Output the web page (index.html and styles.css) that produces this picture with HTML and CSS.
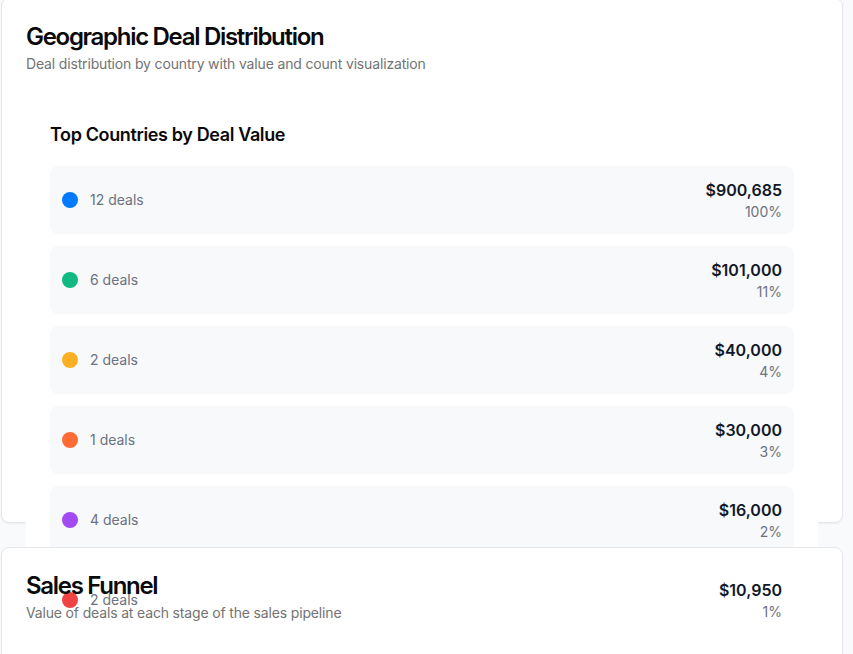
FILE: index.html
```html
<!DOCTYPE html>
<html lang="en">
<head>
<meta charset="utf-8">
<title>Geographic Deal Distribution</title>
<link rel="stylesheet" href="styles.css">
</head>
<body>
<div class="page">
  <div class="card card-geo">
    <div class="card-header">
      <h3 class="card-title">Geographic Deal Distribution</h3>
      <p class="card-desc">Deal distribution by country with value and count visualization</p>
    </div>
    <div class="card-content">
      <div class="panel">
        <h4 class="panel-title">Top Countries by Deal Value</h4>
        <div class="rows">
          <div class="row">
            <div class="row-left"><span class="dot dot-blue"></span><span class="deals">12 deals</span></div>
            <div class="row-right"><div class="value">$900,685</div><div class="pct">100%</div></div>
          </div>
          <div class="row">
            <div class="row-left"><span class="dot dot-green"></span><span class="deals">6 deals</span></div>
            <div class="row-right"><div class="value">$101,000</div><div class="pct">11%</div></div>
          </div>
          <div class="row">
            <div class="row-left"><span class="dot dot-amber"></span><span class="deals">2 deals</span></div>
            <div class="row-right"><div class="value">$40,000</div><div class="pct">4%</div></div>
          </div>
          <div class="row">
            <div class="row-left"><span class="dot dot-orange"></span><span class="deals">1 deals</span></div>
            <div class="row-right"><div class="value">$30,000</div><div class="pct">3%</div></div>
          </div>
          <div class="row">
            <div class="row-left"><span class="dot dot-purple"></span><span class="deals">4 deals</span></div>
            <div class="row-right"><div class="value">$16,000</div><div class="pct">2%</div></div>
          </div>
          <div class="row">
            <div class="row-left"><span class="dot dot-red"></span><span class="deals">2 deals</span></div>
            <div class="row-right"><div class="value">$10,950</div><div class="pct">1%</div></div>
          </div>
        </div>
      </div>
    </div>
  </div>
  <div class="card card-funnel">
    <div class="card-header">
      <h3 class="card-title">Sales Funnel</h3>
      <p class="card-desc">Value of deals at each stage of the sales pipeline</p>
    </div>
    <div class="card-content">
      <div class="funnel-space"></div>
    </div>
  </div>
</div>
</body>
</html>
```

FILE: styles.css
```css
* { box-sizing: border-box; }
html, body { margin: 0; padding: 0; }
body {
  background: #f9fafb;
  font-family: Inter, "Noto Sans", "Liberation Sans", sans-serif;
  color: #0a0a0a;
}
.page {
  padding: 0 10px 0 1px;
  margin-top: -2px;
}
.card {
  background: #ffffff;
  border: 1px solid #e5e7eb;
  border-radius: 8px;
  box-shadow: 0 1px 2px rgba(0,0,0,0.05);
}
.card-geo { height: 525px; }
.card-funnel { margin-top: 24px; }
.card-header {
  padding: 24px;
  display: block;
}
.card-title {
  margin: 0;
  font-size: 24px;
  line-height: 28px;
  font-weight: 600;
  letter-spacing: -1.3px;
  color: #0a0a0a;
}
.card-desc {
  margin: 3px 0 0;
  font-size: 14px;
  line-height: 20px;
  letter-spacing: -0.16px;
  color: #737373;
}
.card-content { padding: 0 24px 24px; }
.panel {
  background: #ffffff;
  padding: 23px 24px 24px;
}
.panel-title {
  margin: 0 0 17px;
  font-size: 18px;
  line-height: 28px;
  font-weight: 600;
  letter-spacing: -0.37px;
  color: #0a0a0a;
}
.rows { display: block; }
.row {
  display: flex;
  align-items: center;
  justify-content: space-between;
  background: #f8f9fb;
  border-radius: 8px;
  padding: 12px;
  margin-bottom: 12px;
}
.row-left {
  display: flex;
  align-items: center;
  gap: 12px;
}
.dot {
  width: 16px;
  height: 16px;
  border-radius: 50%;
  display: block;
}
.dot-blue { background: #007bff; }
.dot-green { background: #10b981; }
.dot-amber { background: #fbb024; }
.dot-orange { background: #ff6b35; }
.dot-purple { background: #a24bf5; }
.dot-red { background: #ef4444; }
.deals {
  font-size: 14px;
  line-height: 20px;
  color: #6b7280;
}
.row-right { text-align: right; }
.value {
  font-size: 16px;
  line-height: 24px;
  font-weight: 600;
  color: #111827;
}
.pct {
  font-size: 14px;
  line-height: 20px;
  color: #6b7280;
}
.funnel-space { height: 300px; }
```
